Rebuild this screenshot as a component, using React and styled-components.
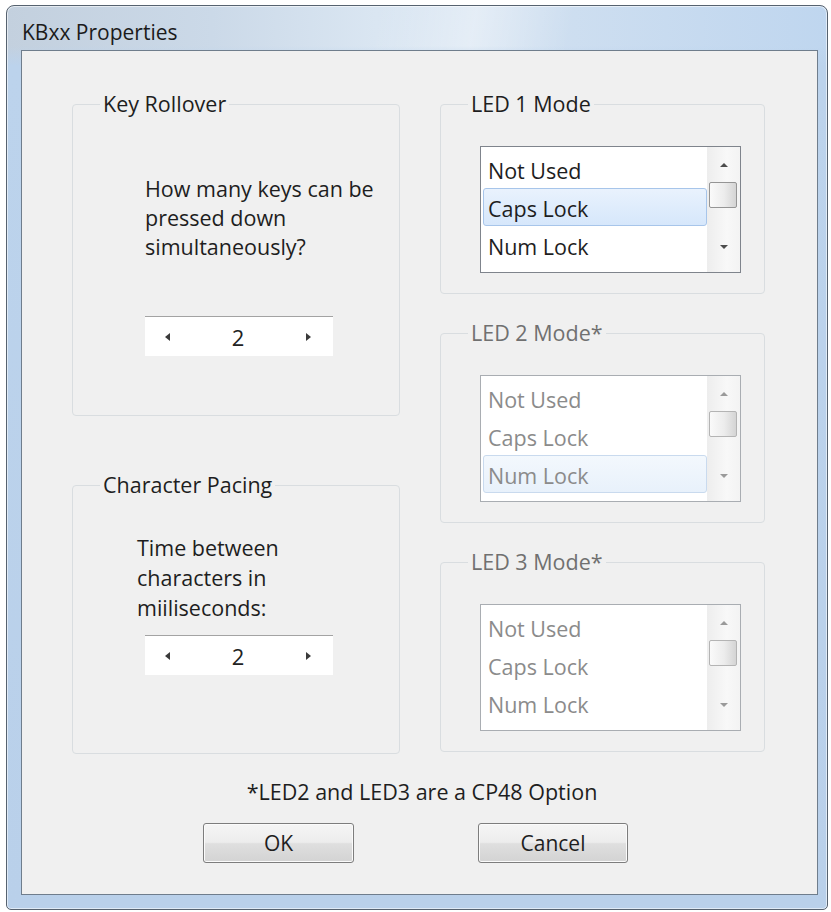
import React from "react";
import styled, { createGlobalStyle, css } from "styled-components";

const GlobalStyle = createGlobalStyle`
  html, body {
    margin: 0;
    padding: 0;
    background: #fff;
  }
  body {
    font-family: "Open Sans", "Noto Sans", sans-serif;
  }
`;

const Window = styled.div`
  box-sizing: border-box;
  width: 822px;
  height: 905px;
  margin: 5px 0 0 6px;
  display: flex;
  flex-direction: column;
  border: 1px solid #56626f;
  border-radius: 8px 8px 5px 5px;
  background:
    linear-gradient(180deg, transparent 0, transparent 40px, #bcd3ec 60px, #b9d0ea 100%),
    linear-gradient(100deg, transparent 38%, rgba(255, 255, 255, 0.4) 48%, transparent 58%),
    linear-gradient(90deg, #c3d0de 0%, #cbd9e8 25%, #dae6f2 45%, #cfdff0 65%, #bfd6ef 100%);
  box-shadow: inset 0 0 0 1px rgba(255, 255, 255, 0.55);
`;

const TitleBar = styled.div`
  height: 44px;
  box-sizing: border-box;
  padding: 8px 0 0 15px;
  display: flex;
  align-items: center;
  font-size: 21px;
  color: #1b1b1b;
`;

const Client = styled.div`
  flex: 1;
  margin: 0 9px 14px 14px;
  border: 1px solid #6f7d8c;
  background: #f0f0f0;
  padding-top: 40px;
  display: flex;
  flex-direction: column;
`;

const Columns = styled.div`
  display: grid;
  grid-template-columns: 328px 325px;
  column-gap: 40px;
  padding-left: 50px;
  align-items: start;
`;

const Column = styled.div`
  display: flex;
  flex-direction: column;
  gap: ${(p) => p.$gap}px;
`;

const Group = styled.fieldset`
  box-sizing: border-box;
  height: ${(p) => p.$h}px;
  margin: 0;
  padding: 0;
  min-inline-size: 0;
  border: 1px solid #d9dde0;
  border-radius: 4px;
`;

const Legend = styled.legend`
  margin-left: 27px;
  padding: 0 3px;
  font-size: 21.5px;
  line-height: 26px;
  color: ${(p) => (p.$disabled ? "#707070" : "#1e1e1e")};
`;

const Prompt = styled.div`
  margin: ${(p) => p.$top}px 0 0 ${(p) => p.$left}px;
  font-size: 21.5px;
  line-height: ${(p) => p.$lh}px;
  color: #1e1e1e;
`;

const Spinner = styled.div`
  box-sizing: border-box;
  width: 188px;
  height: 40px;
  margin: ${(p) => p.$top}px 0 0 72px;
  padding: 0 22px 0 20px;
  display: flex;
  align-items: center;
  justify-content: space-between;
  background: #fff;
  border-top: 1px solid #a3a3a3;
  font-size: 22px;
  color: #222;
`;

const Arrow = styled.span`
  width: 0;
  height: 0;
  border-top: 4.5px solid transparent;
  border-bottom: 4.5px solid transparent;
  ${(p) =>
    p.$dir === "left"
      ? css`border-right: 5px solid #3a3a3a;`
      : css`border-left: 5px solid #3a3a3a;`}
`;

const ListBox = styled.div`
  box-sizing: border-box;
  width: 261px;
  height: 127px;
  margin: 29px 0 0 39px;
  display: flex;
  background: #fff;
  border: 1px solid ${(p) => (p.$disabled ? "#a9adb2" : "#7f848c")};
`;

const Items = styled.div`
  flex: 1;
  padding: 3px 0 0 2px;
`;

const Item = styled.div`
  box-sizing: border-box;
  height: 38px;
  padding: 2px 0 0 4px;
  line-height: 36px;
  font-size: 21.5px;
  border: 1px solid transparent;
  border-radius: 3px;
  color: ${(p) => (p.$disabled ? "#8b8b8b" : "#1e1e1e")};
  ${(p) =>
    p.$selected &&
    (p.$disabled
      ? css`
          background: linear-gradient(#f3f8fd, #e8f1fb);
          border-color: #c9daee;
        `
      : css`
          background: linear-gradient(#e9f2fd, #d6e7fb);
          border-color: #a7c5ea;
        `)}
`;

const ScrollBar = styled.div`
  width: 33px;
  display: flex;
  flex-direction: column;
  align-items: center;
  background: linear-gradient(90deg, #ededed, #f8f8f8 60%, #f3f3f3);
`;

const ScrollButton = styled.div`
  height: ${(p) => p.$h}px;
  display: flex;
  align-items: center;
  justify-content: center;
`;

const ScrollArrow = styled.span`
  width: 0;
  height: 0;
  border-left: 4px solid transparent;
  border-right: 4px solid transparent;
  ${(p) =>
    p.$dir === "up"
      ? css`border-bottom: 4px solid ${p.$disabled ? "#9a9a9a" : "#4c4c4c"};`
      : css`border-top: 4px solid ${p.$disabled ? "#9a9a9a" : "#4c4c4c"};`}
`;

const Thumb = styled.div`
  box-sizing: border-box;
  width: 28px;
  height: 26px;
  margin-left: -2px;
  border: 1px solid ${(p) => (p.$disabled ? "#b4b4b4" : "#959595")};
  border-radius: 2px;
  background: linear-gradient(90deg, #fafafa, #ececec 55%, #d4d4d4);
`;

const Track = styled.div`
  flex: 1;
`;

const Footnote = styled.div`
  margin-top: 25px;
  padding-left: 5px;
  text-align: center;
  font-size: 21.5px;
  line-height: 26px;
  color: #1e1e1e;
`;

const ButtonRow = styled.div`
  margin-top: 18px;
  padding-right: 8px;
  display: flex;
  justify-content: center;
  gap: 124px;
`;

const Button = styled.button`
  box-sizing: border-box;
  width: ${(p) => p.$w}px;
  height: 40px;
  padding: 0;
  border: 1px solid #7d7d7d;
  border-radius: 3px;
  background: linear-gradient(#f5f5f5 0%, #ededed 48%, #dfdfdf 52%, #d3d3d3 100%);
  box-shadow: inset 0 0 0 1px #fbfbfb;
  font-family: "Open Sans", "Noto Sans", sans-serif;
  font-size: 21px;
  color: #1e1e1e;
`;

const OPTIONS = ["Not Used", "Caps Lock", "Num Lock"];

function Stepper({ top, value }) {
  return (
    <Spinner $top={top}>
      <Arrow $dir="left" />
      <span>{value}</span>
      <Arrow $dir="right" />
    </Spinner>
  );
}

function LedGroup({ title, selected, disabled }) {
  return (
    <Group $h={203}>
      <Legend $disabled={disabled}>{title}</Legend>
      <ListBox $disabled={disabled}>
        <Items>
          {OPTIONS.map((o) => (
            <Item key={o} $selected={o === selected} $disabled={disabled}>
              {o}
            </Item>
          ))}
        </Items>
        <ScrollBar>
          <ScrollButton $h={35}>
            <ScrollArrow $dir="up" $disabled={disabled} />
          </ScrollButton>
          <Thumb $disabled={disabled} />
          <Track />
          <ScrollButton $h={50}>
            <ScrollArrow $dir="down" $disabled={disabled} />
          </ScrollButton>
        </ScrollBar>
      </ListBox>
    </Group>
  );
}

export default function App() {
  return (
    <>
      <GlobalStyle />
      <Window>
        <TitleBar>KBxx Properties</TitleBar>
        <Client>
          <Columns>
            <Column $gap={56}>
              <Group $h={325}>
                <Legend>Key Rollover</Legend>
                <Prompt $top={57} $left={72} $lh={29}>
                  How many keys can be
                  <br />
                  pressed down
                  <br />
                  simultaneously?
                </Prompt>
                <Stepper top={55} value={2} />
              </Group>
              <Group $h={282}>
                <Legend>Character Pacing</Legend>
                <Prompt $top={35} $left={64} $lh={30}>
                  Time between
                  <br />
                  characters in
                  <br />
                  miiliseconds:
                </Prompt>
                <Stepper top={12} value={2} />
              </Group>
            </Column>
            <Column $gap={26}>
              <LedGroup title="LED 1 Mode" selected="Caps Lock" />
              <LedGroup title="LED 2 Mode*" selected="Num Lock" disabled />
              <LedGroup title="LED 3 Mode*" disabled />
            </Column>
          </Columns>
          <Footnote>*LED2 and LED3 are a CP48 Option</Footnote>
          <ButtonRow>
            <Button $w={151}>OK</Button>
            <Button $w={150}>Cancel</Button>
          </ButtonRow>
        </Client>
      </Window>
    </>
  );
}
